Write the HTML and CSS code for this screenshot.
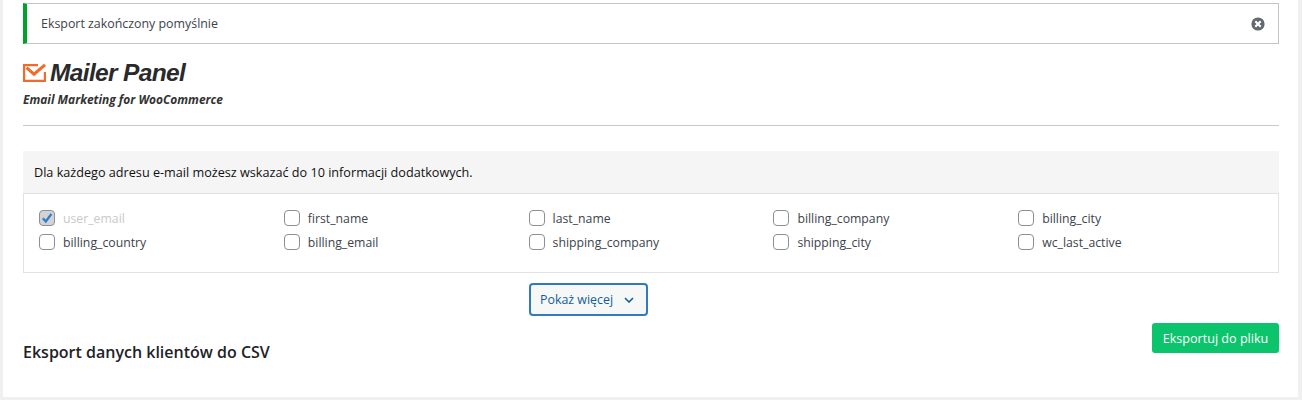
FILE: index.html
```html
<!DOCTYPE html>
<html lang="pl">
<head>
<meta charset="utf-8">
<title>Mailer Panel</title>
<link rel="stylesheet" href="styles.css">
</head>
<body>
<main class="panel">
  <div class="notice">
    <span>Eksport zakończony pomyślnie</span>
    <svg class="close" width="14" height="14" viewBox="0 0 14 14"><circle cx="7" cy="7" r="6.6" fill="#646970"/><path d="M4.3 4.3l5.4 5.4M9.7 4.3l-5.4 5.4" stroke="#fff" stroke-width="2.2"/></svg>
  </div>
  <header class="logo">
    <div class="logo-main">
      <svg width="24" height="18" viewBox="0 0 24 18"><path d="M15 1.1H1.1v15.8h20.8V8" fill="none" stroke="#f26b2a" stroke-width="2.2"/><path d="M3.5 3.6l7.5 6.6L22 .8" fill="none" stroke="#f26b2a" stroke-width="3"/></svg>
      <span class="logo-name">Mailer Panel</span>
    </div>
    <div class="logo-sub">Email Marketing for WooCommerce</div>
  </header>
  <div class="intro">Dla każdego adresu e-mail możesz wskazać do 10 informacji dodatkowych.</div>
  <div class="fields">
    <label class="field disabled"><span class="box checked"><svg width="14" height="14" viewBox="0 0 14 14"><path d="M2.8 7.2l3 3.2 5.6-7.4" fill="none" stroke="#2f7fc8" stroke-width="2.3"/></svg></span>user_email</label>
    <label class="field"><span class="box"></span>first_name</label>
    <label class="field"><span class="box"></span>last_name</label>
    <label class="field"><span class="box"></span>billing_company</label>
    <label class="field"><span class="box"></span>billing_city</label>
    <label class="field"><span class="box"></span>billing_country</label>
    <label class="field"><span class="box"></span>billing_email</label>
    <label class="field"><span class="box"></span>shipping_company</label>
    <label class="field"><span class="box"></span>shipping_city</label>
    <label class="field"><span class="box"></span>wc_last_active</label>
  </div>
  <div class="more-row">
    <button class="more">Pokaż więcej<svg width="10" height="6" viewBox="0 0 10 6"><path d="M1 1l4 4 4-4" fill="none" stroke="#135e96" stroke-width="1.6"/></svg></button>
  </div>
  <div class="export-row">
    <h2>Eksport danych klientów do CSV</h2>
    <button class="export">Eksportuj do pliku</button>
  </div>
</main>
</body>
</html>
```

FILE: styles.css
```css
* { box-sizing: border-box; }
html, body { margin: 0; height: 400px; overflow: hidden; }
body {
  background: #f0f0f1;
  padding: 0 4px 3px 3px;
  font-family: "Open Sans", "Noto Sans", sans-serif;
  font-size: 12.4px;
  color: #2c3338;
}
.panel {
  background: #fff;
  height: 397px;
  padding: 3px 19px 0 20px;
}
.notice {
  height: 41px;
  display: flex;
  align-items: center;
  justify-content: space-between;
  border: 1px solid #c3c4c7;
  border-left: 4px solid #00a32a;
  padding: 0 13px 0 14px;
  color: #3c434a;
}
.close { display: block; }
.logo {
  height: 82px;
  padding-top: 17px;
  border-bottom: 1px solid #c8c9cb;
}
.logo-main { display: flex; align-items: center; gap: 3px; height: 24px; }
.logo-name {
  font-family: "Liberation Sans", sans-serif;
  font-size: 24.5px;
  font-weight: 700;
  font-style: italic;
  letter-spacing: -0.65px;
  color: #2a2a2a;
}
.logo-sub {
  margin-top: 6px;
  font-family: "Open Sans", sans-serif;
  font-size: 11.95px;
  font-weight: 700;
  font-style: italic;
  color: #333;
}
.intro {
  margin-top: 25px;
  height: 42px;
  padding: 0 11px;
  display: flex;
  align-items: center;
  background: #f5f5f5;
  color: #111;
  font-size: 12.65px;
}
.fields {
  height: 80px;
  border: 1px solid #e2e2e3;
  padding: 12px 15px 0;
  display: grid;
  grid-template-columns: repeat(5, 1fr);
  grid-auto-rows: 24px;
  font-size: 12.25px;
}
.field { display: flex; align-items: center; gap: 8px; color: #3c434a; }
.field.disabled { color: #c8c9cb; }
.box {
  width: 16px;
  height: 16px;
  border: 1px solid #8c8f94;
  border-radius: 4px;
  background: #fff;
  display: flex;
  align-items: center;
  justify-content: center;
}
.box.checked { background: #d3d3d5; }
.more-row { padding: 10px 0 0 506px; }
.more {
  width: 119px;
  height: 33px;
  display: flex;
  align-items: center;
  gap: 11px;
  padding: 0 0 0 9px;
  background: #f6f7f7;
  border: 2px solid #2f7bbd;
  border-radius: 4px;
  color: #135e96;
  font: inherit;
}
.export-row {
  display: flex;
  justify-content: space-between;
  align-items: flex-start;
  margin-top: 7px;
}
.export-row h2 {
  margin: 18px 0 0;
  font-size: 16px;
  font-weight: 600;
  line-height: 22px;
  color: #1d2327;
}
.export {
  width: 127px;
  height: 30px;
  background: #0bc46b;
  border: 0;
  border-radius: 3px;
  color: #fff;
  font: inherit;
  font-size: 12.6px;
}
```
